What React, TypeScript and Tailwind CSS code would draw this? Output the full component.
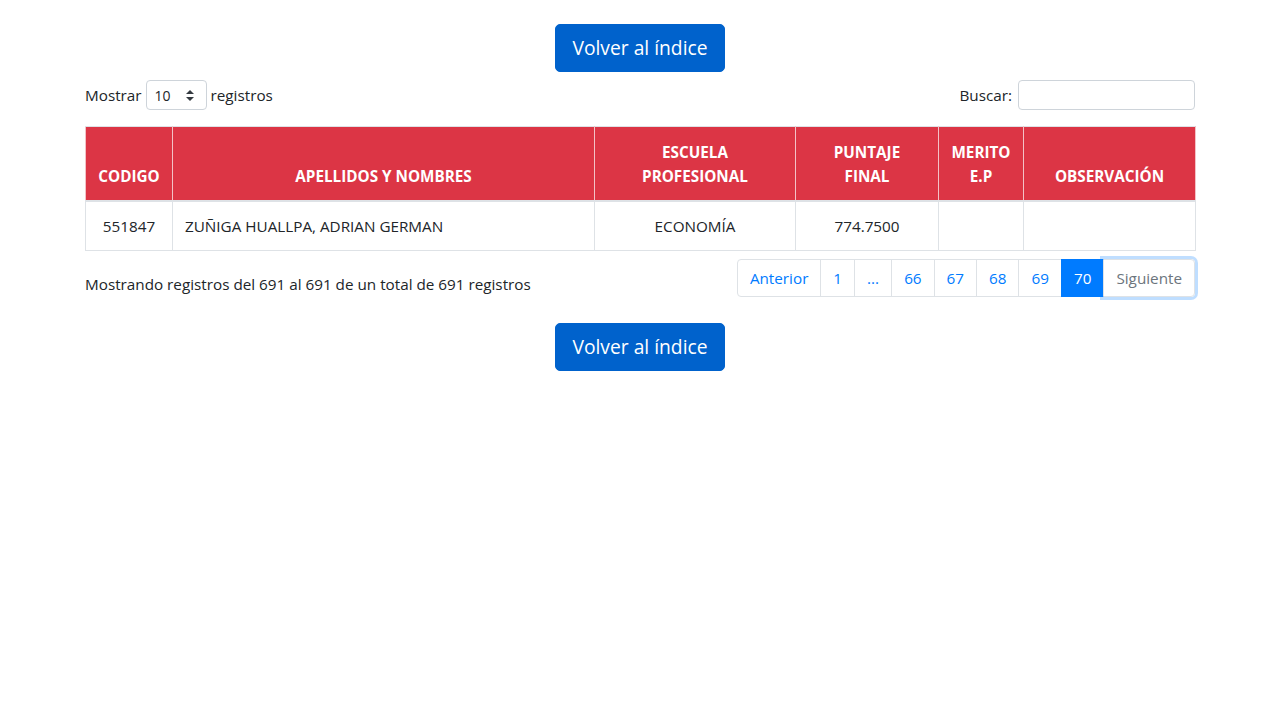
import React from "react";

const font = { fontFamily: '"Open Sans", "Noto Sans", sans-serif' };

function BackButton() {
  return (
    <div className="flex justify-center">
      <a
        href="#"
        className="inline-block rounded-[5px] border border-[#0062cc] bg-[#0062cc] px-4 py-2 text-[19.25px] leading-[30px] text-white"
      >
        Volver al índice
      </a>
    </div>
  );
}

export default function App() {
  const columns = [
    { label: ["CODIGO"], w: "w-[87px]" },
    { label: ["APELLIDOS Y NOMBRES"], w: "w-[422px]" },
    { label: ["ESCUELA", "PROFESIONAL"], w: "w-[201px]" },
    { label: ["PUNTAJE", "FINAL"], w: "w-[143px]" },
    { label: ["MERITO", "E.P"], w: "w-[85px]" },
    { label: ["OBSERVACIÓN"], w: "w-[172px]" },
  ];

  const pages = ["1", "...", "66", "67", "68", "69"];

  return (
    <div className="min-h-[720px] bg-white text-[16px] text-[#212529]" style={font}>
      <div className="mx-auto w-[1110px] pt-6">
        <BackButton />

        {/* length + search controls */}
        <div className="mt-2 flex items-center justify-between">
          <label className="flex items-center gap-1 text-[15.25px]">
            Mostrar
            <span className="relative inline-flex h-[30px] w-[61px] items-center rounded border border-[#ced4da] pl-2 text-[14px]">
              10
              <svg className="absolute right-3 top-[9px]" width="8" height="11" viewBox="0 0 8 11">
                <path d="M4 0 L8 4 H0 Z" fill="#343a40" />
                <path d="M4 11 L8 7 H0 Z" fill="#343a40" />
              </svg>
            </span>
            registros
          </label>
          <label className="flex items-center gap-[6px] text-[15.25px]">
            Buscar:
            <input className="h-[30px] w-[177px] rounded border border-[#ced4da] px-2 text-[14px] outline-none" />
          </label>
        </div>

        {/* table */}
        <table className="mt-4 w-full table-fixed border-collapse border border-[#dee2e6]">
          <thead>
            <tr className="bg-[#dc3545] text-white">
              {columns.map((c) => (
                <th
                  key={c.label.join(" ")}
                  className={`${c.w} border-x border-t border-b-2 border-x-[#f3c2c7] border-t-[#dee2e6] border-b-[#dee2e6] px-3 pb-3 pt-[13px] align-bottom text-center text-[15.25px] font-bold leading-6`}
                >
                  {c.label.map((l) => (
                    <div key={l}>{l}</div>
                  ))}
                </th>
              ))}
            </tr>
          </thead>
          <tbody>
            <tr className="text-[15.25px] leading-6">
              <td className="border border-[#dee2e6] p-3 text-center">551847</td>
              <td className="border border-[#dee2e6] p-3">ZUÑIGA HUALLPA, ADRIAN GERMAN</td>
              <td className="border border-[#dee2e6] p-3 text-center">ECONOMÍA</td>
              <td className="border border-[#dee2e6] p-3 text-center">774.7500</td>
              <td className="border border-[#dee2e6] p-3"></td>
              <td className="border border-[#dee2e6] p-3"></td>
            </tr>
          </tbody>
        </table>

        {/* info + pagination */}
        <div className="mt-2 flex items-center justify-between">
          <div className="pt-[12px] text-[15.25px]">
            Mostrando registros del 691 al 691 de un total de 691 registros
          </div>
          <ul className="flex text-[15.25px] leading-6">
            <li className="rounded-l border border-[#dee2e6] px-3 py-[6px] text-[#007bff]">Anterior</li>
            {pages.map((p) => (
              <li
                key={p}
                className="-ml-px border border-[#dee2e6] px-3 py-[6px] text-[#007bff]"
              >
                {p}
              </li>
            ))}
            <li className="-ml-px border border-[#007bff] bg-[#007bff] px-3 py-[6px] text-white">70</li>
            <li className="-ml-px rounded-r border border-[#dee2e6] px-3 py-[6px] text-[#6c757d] shadow-[0_0_0_3px_rgba(0,123,255,0.25)]">
              Siguiente
            </li>
          </ul>
        </div>

        <div className="mt-[26px]">
          <BackButton />
        </div>
      </div>
    </div>
  );
}
